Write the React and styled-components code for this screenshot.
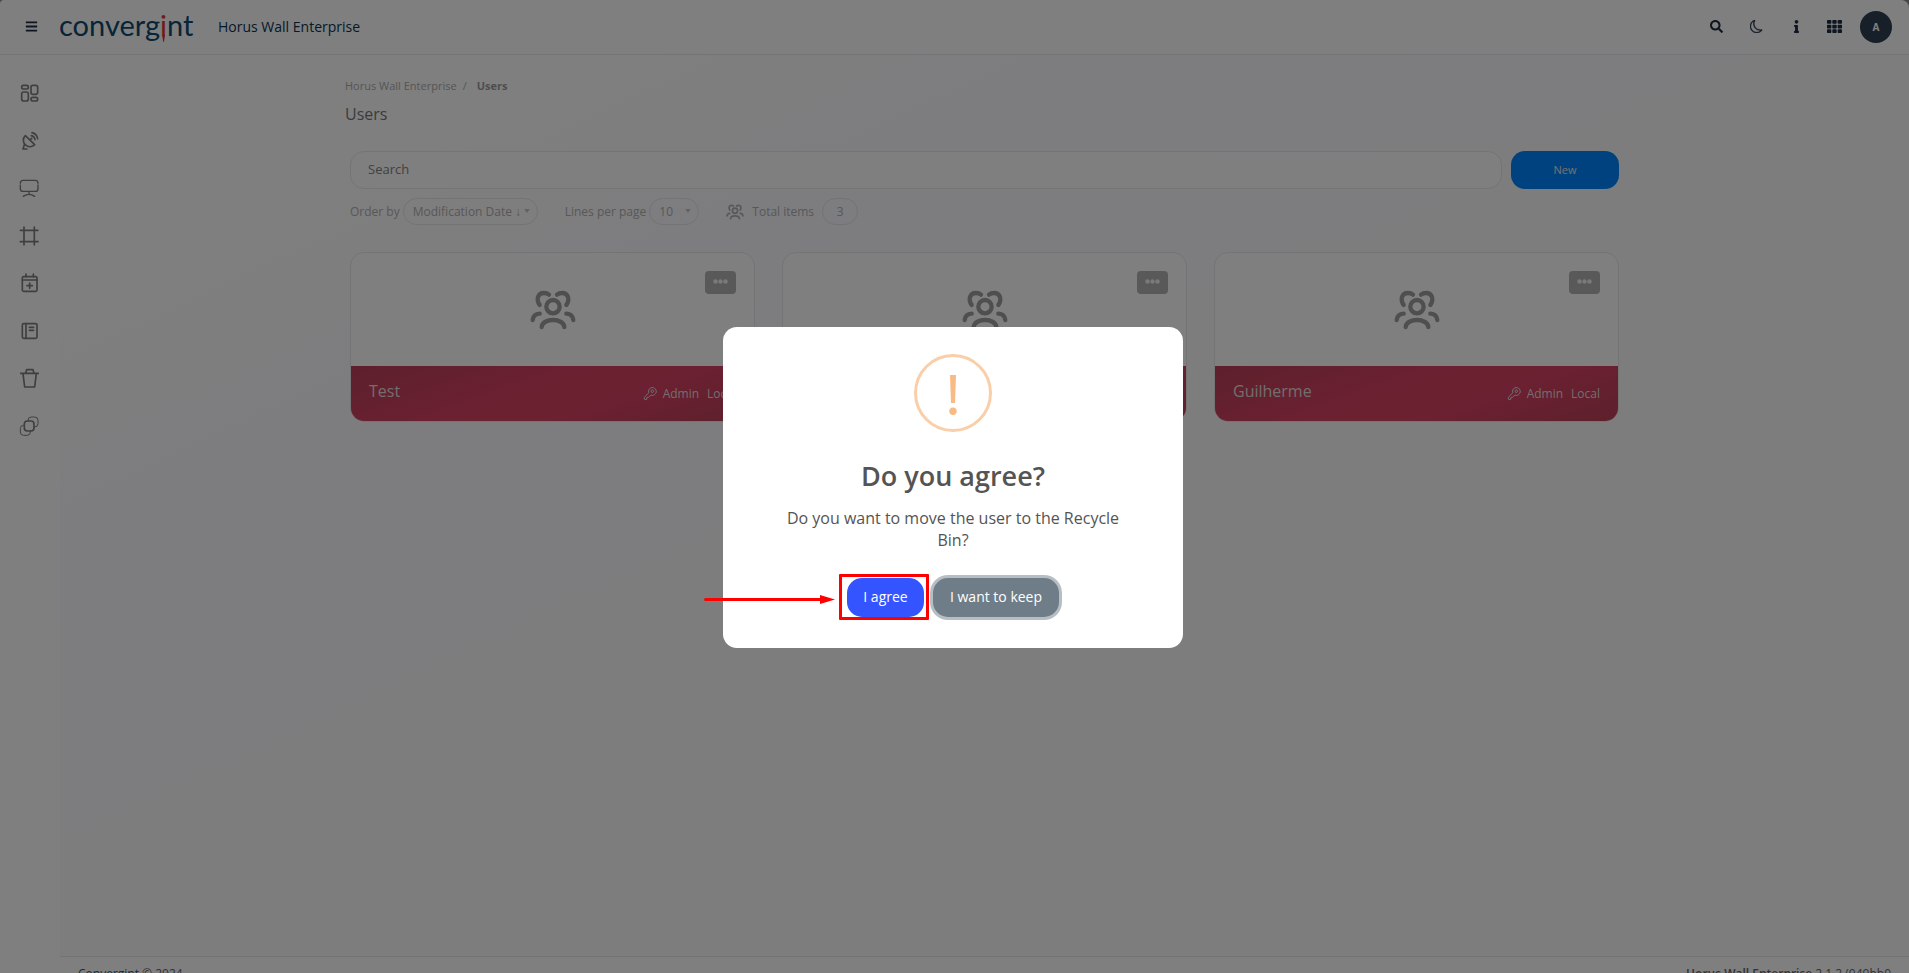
import React from "react";
import styled, { createGlobalStyle } from "styled-components";
import { FaBars, FaSearch, FaInfo, FaTh } from "react-icons/fa";
import { BsMoon } from "react-icons/bs";

const GlobalStyle = createGlobalStyle`
  *, *::before, *::after { box-sizing: border-box; }
  html, body { margin: 0; height: 100%; overflow: hidden; }
  body {
    background: #8c8c8c;
    font-family: "Open Sans", "Liberation Sans", sans-serif;
    font-size: 13px;
    color: #999;
  }
  button, input, select { font: inherit; color: inherit; }
  h1, h2, p, ul { margin: 0; padding: 0; }
  a { color: inherit; text-decoration: none; }
  svg { display: block; }
`;

const Page = styled.div`
  display: flex;
  flex-direction: column;
  min-height: calc(100vh + 27px);
  background: #fff;
  border-radius: 4px 8px 0 0;
  overflow: hidden;
`;

const Header = styled.header`
  display: flex;
  align-items: center;
  height: 55px;
  padding: 0 17px 2px 18px;
  border-bottom: 1px solid #e9e9ee;
  color: #0c3350;
`;

const IconButton = styled.button`
  display: grid;
  place-items: center;
  width: ${(p) => p.$w || 40}px;
  height: 40px;
  padding: 0;
  border: 0;
  background: none;
  color: #1b2d42;
`;

const Logo = styled.a`
  margin: 0 0 2px 15px;
  font-family: Lato, sans-serif;
  font-size: 29px;
  line-height: 40px;
  color: #0d4a70;
  width: 134px;
`;

const LogoMark = styled.span`
  position: relative;
  color: #e0352f;
  &::after {
    content: "";
    position: absolute;
    left: 2px;
    bottom: 0;
    width: 3px;
    height: 7px;
    background: #e0352f;
    clip-path: polygon(0 0, 100% 0, 60% 100%, 40% 100%);
  }
`;

const Product = styled.span`
  margin-left: 25px;
  font-size: 14px;
  font-weight: 500;
`;

const Tools = styled.div`
  display: flex;
  align-items: center;
  margin-left: auto;
`;

const Avatar = styled.button`
  width: 32px;
  height: 32px;
  margin-left: 8px;
  margin-top: 2px;
  padding: 0;
  border: 0;
  border-radius: 50%;
  background: #2e3e50;
  color: #fff;
  font-size: 10px;
  font-weight: 700;
`;

const Body = styled.div`
  flex: 1;
  display: flex;
`;

const Sidebar = styled.nav`
  width: 60px;
  padding: 28px 2px 0 0;
  color: #7e7e7e;
  ul {
    list-style: none;
    height: 353px;
    display: flex;
    flex-direction: column;
    justify-content: space-between;
    align-items: center;
  }
`;

const Content = styled.div`
  flex: 1;
  min-width: 0;
  display: flex;
  flex-direction: column;
  background: linear-gradient(155deg, #fff 10%, #fafafe 30%, #fafafd 100%);
`;

const Main = styled.main`
  flex: 1;
  width: 100%;
  max-width: 1279px;
  margin: 0 auto;
  padding-top: 23px;
`;

const Crumbs = styled.nav`
  display: flex;
  gap: 6px;
  font-size: 11px;
  line-height: 16px;
  color: #ababab;
  strong { margin-left: 4px; color: #9c9c9c; }
`;

const Title = styled.h1`
  margin-top: 8px;
  font-size: 16px;
  line-height: 24px;
  font-weight: 400;
  color: #777;
`;

const SearchRow = styled.form`
  display: flex;
  gap: 9px;
  padding: 0 5px;
  margin-top: 25px;
`;

const SearchInput = styled.input`
  flex: 1;
  min-width: 0;
  height: 38px;
  padding: 0 17px 2px;
  border: 1px solid #e9e9e9;
  border-radius: 14px;
  background: #fff;
  font-size: 13px;
  &::placeholder { color: #828282; opacity: 1; }
`;

const NewButton = styled.button`
  width: 108px;
  height: 38px;
  padding: 0 0 1px;
  border: 0;
  border-radius: 14px;
  background: #0084ff;
  color: #e6e6e6;
  font-size: 11px;
`;

const Filters = styled.div`
  display: flex;
  align-items: center;
  gap: 27px;
  padding: 0 5px;
  margin-top: 9px;
  font-size: 12px;
  color: #b0b0b0;
`;

const Filter = styled.label`
  display: flex;
  align-items: center;
  gap: 3px;
`;

const SelectWrap = styled.span`
  position: relative;
  svg {
    position: absolute;
    right: 8px;
    top: 11px;
    pointer-events: none;
  }
`;

const PillSelect = styled.select`
  appearance: none;
  display: block;
  width: ${(p) => p.$w}px;
  height: 27px;
  padding: 0 9px;
  border: 1px solid #e6e6e6;
  border-radius: 14px;
  background: transparent;
`;

const Total = styled.div`
  display: flex;
  align-items: center;
  gap: 8px;
  output {
    width: 36px;
    line-height: 25px;
    text-align: center;
    border: 1px solid #e6e6e6;
    border-radius: 14px;
  }
`;

const Cards = styled.div`
  display: grid;
  grid-template-columns: repeat(3, 1fr);
  gap: 27px;
  padding: 0 5px;
  margin-top: 27px;
`;

const Card = styled.article`
  display: flex;
  flex-direction: column;
  height: 170px;
  border: 1px solid #e8e8e8;
  border-radius: 14px;
  background: #fff;
  overflow: hidden;
`;

const CardTop = styled.div`
  position: relative;
  flex: 1;
  display: flex;
  justify-content: center;
  padding-top: 37px;
  color: #9e9e9e;
`;

const MoreButton = styled.button`
  position: absolute;
  top: 18px;
  right: 18px;
  width: 31px;
  height: 23px;
  padding: 0 0 2px;
  border: 0;
  border-radius: 4px;
  background: #b2b2b2;
  color: #f4f4f4;
  display: grid;
  place-items: center;
`;

const CardFooter = styled.footer`
  display: flex;
  align-items: center;
  gap: 8px;
  height: 55px;
  padding: 0 18px;
  background: linear-gradient(160deg, #bc4058 0%, #d84263 45%, #d84263 62%, #bc4058 100%);
  color: #e4dcde;
  font-size: 12px;
  font-weight: 500;
`;

const CardName = styled.h2`
  margin-right: auto;
  padding-bottom: 5px;
  font-size: 16px;
  font-weight: 500;
`;

const Role = styled.span`
  display: flex;
  align-items: center;
  gap: 6px;
`;

const Footer = styled.footer`
  display: flex;
  justify-content: space-between;
  height: 44px;
  padding: 7px 18px;
  border-top: 1px solid #e6e6e6;
  background: #fff;
  font-size: 12px;
  line-height: 20px;
  color: #666;
  a { color: #1c5a84; }
  strong { font-weight: 600; }
`;

const Backdrop = styled.div`
  position: fixed;
  inset: 0;
  display: grid;
  place-items: center;
  padding: 1px 3px 0 0;
  background: rgba(0, 0, 0, 0.5);
`;

const Modal = styled.div`
  display: flex;
  flex-direction: column;
  align-items: center;
  width: 460px;
  padding: 27px 30px 31px;
  border-radius: 14px;
  background: #fff;
  text-align: center;
`;

const ModalTitle = styled.h2`
  margin-top: 24px;
  font-size: 27px;
  line-height: 40px;
  font-weight: 600;
  color: #545454;
`;

const ModalText = styled.p`
  width: 360px;
  margin-top: 11px;
  font-size: 16px;
  line-height: 22px;
  color: #545454;
`;

const Actions = styled.div`
  position: relative;
  display: flex;
  gap: 9px;
  margin-top: 27px;
`;

const ActionButton = styled.button`
  width: ${(p) => p.$w}px;
  height: 39px;
  padding: 0 0 2px;
  border: 0;
  border-radius: 15px;
  background: ${(p) => p.$bg};
  color: #fff;
  font-size: 14px;
  font-weight: 500;
  box-shadow: ${(p) => (p.$ring ? "0 0 0 3px #b7bec3" : "none")};
`;

const Highlight = styled.div`
  position: absolute;
  left: -8px;
  top: -4px;
  width: 90px;
  height: 46px;
  border: 3px solid #fe0000;
  border-radius: 1px;
  pointer-events: none;
`;

const Pointer = styled.svg`
  position: absolute;
  left: -143px;
  top: 17px;
`;

function Users({ w, h }) {
  return (
    <svg width={w} height={h} viewBox="568 150 138 120" fill="none" stroke="currentColor" strokeWidth="13" strokeLinecap="round">
      <circle cx="637" cy="200" r="20" />
      <path d="M603 261C606 233 668 233 671 261" />
      <path d="M576 240Q578 222 597 221M698 240Q696 222 677 221" />
      <path d="M597 195C585 177 592 159 610 159Q619 159 625 164M677 195C689 177 682 159 664 159Q655 159 649 164" />
    </svg>
  );
}

const Caret = () => (
  <svg width="6" height="4" viewBox="0 0 7 5"><path d="M0 0H7L3.5 5Z" fill="#c4c4c4" /></svg>
);

const KeyIcon = () => (
  <svg width="14" height="15" viewBox="909 443 42 46" fill="none" stroke="currentColor" strokeWidth="3" strokeLinejoin="round">
    <path d="M926 464A12 12 0 1 1 933 471L925 478L920 479V484L914 485L912 479Z" />
    <circle cx="937" cy="459" r="4" />
  </svg>
);

const navItems = [
  ["Dashboard", <><rect x="8" y="7" width="20" height="11" rx="5" /><rect x="8" y="27" width="20" height="27" rx="6" /><rect x="36" y="7" width="20" height="27" rx="6" /><rect x="36" y="43" width="20" height="11" rx="5" /></>],
  ["Sources", <path d="M19 14C10 22 12 36 20 42C28 50 40 48 47 41ZM16 41L12 54H24M33 27L38 22M37 14Q46 16 48 26M39 5Q53 8 56 23" />],
  ["Displays", <path strokeWidth="4" d="M4 16Q4 7 12 7H49Q57 7 57 16M4 21V32Q4 40 12 40H49Q57 40 57 32V21M30 40V49M13 55Q30 43 47 55" />],
  ["Layouts", <path d="M15 3V57M46 3V57M4 13H57M4 47H57" />],
  ["Schedule", <><rect x="10" y="11" width="44" height="44" rx="4" /><path d="M10 21H54M21 3V11M43 3V11M32 30V46M24 38H40" /></>],
  ["Logs", <><rect x="10" y="8" width="44" height="44" rx="4" /><path d="M21 8V52M31 19H44M31 28H44" /></>],
  ["Recycle Bin", <path d="M5 16H58M20 15L23 5H42L45 15M12 17L17 57H47L52 17" />],
  ["Integrations", <><path strokeWidth="3" d="M27 15V13Q27 3 37 3H47Q57 3 57 13V23Q57 33 47 33H45M16 28H14Q4 28 4 38V48Q4 58 14 58H24Q34 58 34 48V45" /><rect x="16" y="15" width="29" height="30" rx="9" /></>],
];

const users = ["Test", "Admin", "Guilherme"];

export default function App() {
  return (
    <>
      <GlobalStyle />
      <Page>
        <Header>
          <IconButton $w={26} aria-label="Menu"><FaBars size={13} /></IconButton>
          <Logo href="#">converg<LogoMark>i</LogoMark>nt</Logo>
          <Product>Horus Wall Enterprise</Product>
          <Tools>
            <IconButton aria-label="Search"><FaSearch size={13} /></IconButton>
            <IconButton aria-label="Dark mode"><BsMoon size={13} strokeWidth={0.5} /></IconButton>
            <IconButton aria-label="Information"><FaInfo size={13} /></IconButton>
            <IconButton $w={36} aria-label="Applications"><FaTh size={15} /></IconButton>
            <Avatar>A</Avatar>
          </Tools>
        </Header>
        <Body>
          <Sidebar aria-label="Sections">
            <ul>
              {navItems.map(([name, shape]) => (
                <li key={name}>
                  <a href="#" aria-label={name}>
                    <svg width="20" height="20" viewBox="0 0 60 60" fill="none" stroke="currentColor" strokeWidth="5" strokeLinecap="round" strokeLinejoin="round">{shape}</svg>
                  </a>
                </li>
              ))}
            </ul>
          </Sidebar>
          <Content>
            <Main>
              <Crumbs aria-label="Breadcrumb">
                <a href="#">Horus Wall Enterprise</a><span>/</span><strong>Users</strong>
              </Crumbs>
              <Title>Users</Title>
              <SearchRow>
                <SearchInput aria-label="Search" placeholder="Search" />
                <NewButton type="button">New</NewButton>
              </SearchRow>
              <Filters>
                <Filter>
                  Order by
                  <SelectWrap>
                    <PillSelect $w={135}><option>Modification Date ↓</option></PillSelect>
                    <Caret />
                  </SelectWrap>
                </Filter>
                <Filter>
                  Lines per page
                  <SelectWrap>
                    <PillSelect $w={50}><option>10</option></PillSelect>
                    <Caret />
                  </SelectWrap>
                </Filter>
                <Total><Users w={18} h={16} />Total items<output>3</output></Total>
              </Filters>
              <Cards>
                {users.map((name) => (
                  <Card key={name}>
                    <CardTop>
                      <Users w={46} h={40} />
                      <MoreButton aria-label={`Options for ${name}`}>
                        <svg width="15" height="5" viewBox="0 0 15 5" fill="currentColor"><circle cx="2.5" cy="2.5" r="2.2" /><circle cx="7.5" cy="2.5" r="2.2" /><circle cx="12.5" cy="2.5" r="2.2" /></svg>
                      </MoreButton>
                    </CardTop>
                    <CardFooter>
                      <CardName>{name}</CardName>
                      <Role><KeyIcon />Admin</Role>
                      <span>Local</span>
                    </CardFooter>
                  </Card>
                ))}
              </Cards>
            </Main>
            <Footer>
              <span><a href="#">Convergint</a> © 2024</span>
              <span><strong>Horus Wall Enterprise</strong> 2.1.2 (949bb0</span>
            </Footer>
          </Content>
        </Body>
      </Page>
      <Backdrop>
        <Modal role="dialog" aria-modal="true" aria-labelledby="confirm-title">
          <svg width="78" height="78" viewBox="0 0 78 78">
            <circle cx="39" cy="39" r="37.5" fill="none" stroke="#facea8" strokeWidth="3" />
            <path d="M36 21H42L41 49H37Z" fill="#f8bb86" />
            <circle cx="39" cy="57.3" r="3.7" fill="#f8bb86" />
          </svg>
          <ModalTitle id="confirm-title">Do you agree?</ModalTitle>
          <ModalText>Do you want to move the user to the Recycle Bin?</ModalText>
          <Actions>
            <ActionButton $w={77} $bg="#3454ff">I agree</ActionButton>
            <ActionButton $w={126} $bg="#6e7d88" $ring>I want to keep</ActionButton>
            <Highlight />
            <Pointer width="131" height="9" viewBox="0 0 131 9" fill="#fe0000">
              <path d="M1.5 3H116V0L131 4.5L116 9V6H1.5A1.5 1.5 0 0 1 1.5 3Z" />
            </Pointer>
          </Actions>
        </Modal>
      </Backdrop>
    </>
  );
}
